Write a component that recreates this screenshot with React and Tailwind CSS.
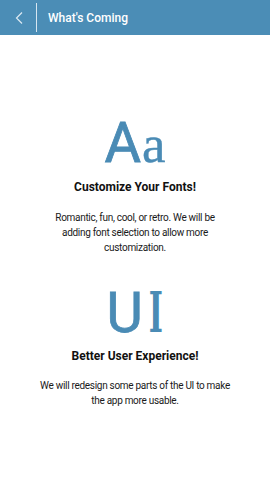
export default function App() {
  return (
    <div className="w-[270px] h-[480px] bg-white flex flex-col font-['Roboto',sans-serif]">
      <div className="h-[35px] bg-[#4b8db6] flex items-center shrink-0">
        <div className="w-[36px] h-full flex items-center justify-center pl-[2px]">
          <svg width="10" height="14" viewBox="0 0 10 14" fill="none">
            <path d="M8 1.5 L2.5 7 L8 12.5" stroke="#dce9f3" strokeWidth="1.2" />
          </svg>
        </div>
        <div className="w-px h-[29px] bg-[#d6e6f1]" />
        <div className="pl-[11px] text-white text-[12px] font-medium">What's Coming</div>
      </div>
      <div className="flex flex-col items-center text-center">
        <div className="mt-[80px] h-[56px] flex items-baseline justify-center leading-none text-[#4a8bb5]">
          <span className="text-[56px] font-normal [-webkit-text-stroke:0.8px_#4a8bb5] font-['Roboto',sans-serif]">A</span>
          <span className="text-[53px] ml-[1px] [-webkit-text-stroke:0.4px_#4a8bb5] font-['Liberation_Serif',serif]">a</span>
        </div>
        <div className="mt-[9px] text-[12px] leading-[14px] font-bold text-[#111]">Customize Your Fonts!</div>
        <div className="mt-[16px] text-[10px] leading-[15px] tracking-[-0.3px] text-[#1a1a1a]">
          Romantic, fun, cool, or retro. We will be
          <br />
          adding font selection to allow more
          <br />
          customization.
        </div>
        <div className="mt-[29px] h-[56px] flex items-baseline justify-center leading-none text-[#4a8bb5] pl-[4px]">
          <span className="text-[56px] font-normal [-webkit-text-stroke:0.8px_#4a8bb5] font-['Roboto',sans-serif]">U</span>
          <span className="text-[56px] ml-[1px] inline-block font-bold scale-x-[0.6] font-['DejaVu_Serif_Condensed','DejaVu_Serif',serif]">I</span>
        </div>
        <div className="mt-[9px] text-[12px] leading-[14px] font-bold text-[#111]">Better User Experience!</div>
        <div className="mt-[15px] text-[10px] leading-[15px] tracking-[-0.3px] text-[#1a1a1a]">
          We will redesign some parts of the UI to make
          <br />
          the app more usable.
        </div>
      </div>
    </div>
  );
}
